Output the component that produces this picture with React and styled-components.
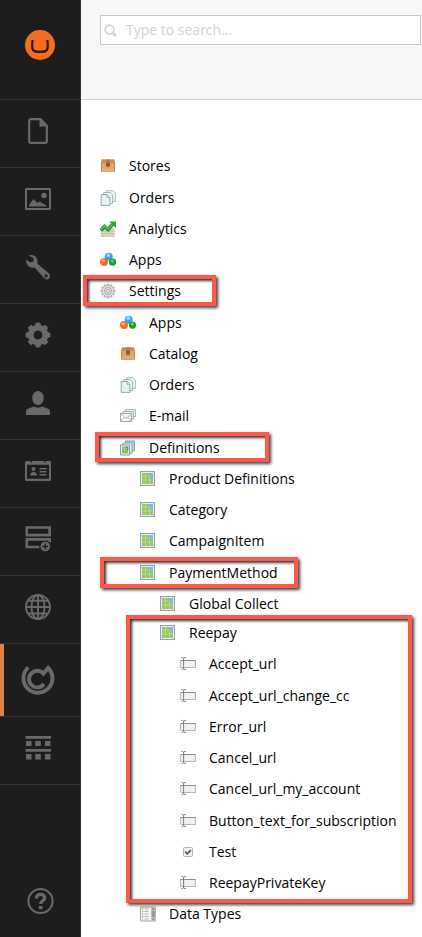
import React from "react";
import styled, { createGlobalStyle } from "styled-components";

const GlobalStyle = createGlobalStyle`
  * { box-sizing: border-box; }
  body {
    margin: 0;
    background: #fff;
    font-family: "Open Sans", "Noto Sans", sans-serif;
    font-size: 14px;
    color: #000;
  }
`;

const Page = styled.div`
  position: relative;
  display: flex;
  width: 422px;
  height: 937px;
  overflow: hidden;
`;

const Sidebar = styled.nav`
  display: flex;
  flex-direction: column;
  flex: none;
  width: 81px;
  background: #1d1d1d;
  border-right: 1px solid #343434;
`;

const LogoCell = styled.div`
  height: 100px;
  border-bottom: 1px solid #343434;
`;

const NavCell = styled.div`
  height: ${(p) => (p.$active ? 73 : 68)}px;
  border-bottom: 1px solid #343434;
  box-shadow: ${(p) => (p.$active ? "inset 4px 0 0 #e0824c" : "none")};
`;

const HelpCell = styled.div`
  margin-top: auto;
  height: 68px;
`;

const NavSvg = styled.svg`
  display: block;
  width: 80px;
  height: ${(p) => p.$h || 67}px;
  color: #696969;
  fill: currentColor;
  stroke: none;
`;

const Main = styled.main`
  flex: 1;
  display: flex;
  flex-direction: column;
  min-width: 0;
`;

const SearchBar = styled.header`
  height: 100px;
  padding: 15px 1px 0 19px;
  background: #f7f7f7;
  border-bottom: 1px solid #d5d5d5;
`;

const SearchField = styled.div`
  display: flex;
  align-items: center;
  gap: 9px;
  height: 30px;
  padding-left: 3px;
  background: #fff;
  border: 1px solid #c7c7c7;
  color: #d3d3d3;
  line-height: 20px;
`;

const SearchSvg = styled.svg`
  width: 13px;
  height: 14px;
  margin-top: 2px;
`;

const Tree = styled.div`
  padding: 50px 0 0 19px;
`;

const Row = styled.div`
  display: flex;
  align-items: center;
  gap: 13px;
  height: 32px;
  margin-bottom: ${(p) => p.$pitch - 32}px;
  padding-left: ${(p) => p.$level * 20}px;
  white-space: nowrap;
`;

const Label = styled.span`
  line-height: 20px;
`;

const TreeSvg = styled.svg`
  flex: none;
  width: 16px;
  height: 16px;
`;

const Highlight = styled.div`
  position: absolute;
  left: ${(p) => p.$x}px;
  top: ${(p) => p.$y}px;
  width: ${(p) => p.$w}px;
  height: ${(p) => p.$h}px;
  border: 4px solid #fd5a4c;
  box-shadow: 2px 2px 3px rgba(0, 0, 0, 0.75), inset 2px 2px 3px rgba(0, 0, 0, 0.8);
  pointer-events: none;
`;

const gearPath = (cx, cy, teeth, outer, inner, hole) => {
  const pts = [];
  const step = (Math.PI * 2) / teeth;
  for (let i = 0; i < teeth; i++) {
    const a = i * step;
    [[-0.3, inner], [-0.2, outer], [0.2, outer], [0.3, inner]].forEach(([f, r]) => {
      pts.push(`${(cx + r * Math.cos(a + f * step)).toFixed(2)} ${(cy + r * Math.sin(a + f * step)).toFixed(2)}`);
    });
  }
  return `M${pts.join("L")}ZM${cx - hole} ${cy}a${hole} ${hole} 0 1 0 ${hole * 2} 0a${hole} ${hole} 0 1 0 ${-hole * 2} 0Z`;
};

const navIcons = {
  content: (
    <>
      <path d="M31 19.2h9.500l6.300 6.500v15.600a1.600 1.600 0 0 1-1.600 1.600H30.800a1.600 1.600 0 0 1-1.600-1.600V20.800a1.600 1.600 0 0 1 1.800-1.600z" fill="none" stroke="currentColor" strokeWidth="2.200" />
      <path d="M39.500 19H41l6.500 7.500H42.500L39.500 27z" />
    </>
  ),
  media: (
    <>
      <path fillRule="evenodd" d="M26 20h24l1 1v20l-1 1H26l-1-1V21zM27 22v18h22V22z" />
      <path d="M29 38.500v-1.500l4.500-6 4 4 2-1.500 7 4v1z" />
      <circle cx="44" cy="27.500" r="2.700" />
    </>
  ),
  settings: (
    <path fillRule="evenodd" d="M28.500 19.500c4-1.700 9 1 9 6 0 1-.2 1.900-.2 1.900L49 37.500c3 3-1 8-4.500 5L34.500 31.500c-4 1-8-1.500-8.300-6.200l-.1-1.800 4.100 3 3.500-1-.2-3.600zM46 38.300a1.600 1.600 0 1 0 .1 3.200 1.600 1.600 0 0 0-.1-3.200z" />
  ),
  developer: <path fillRule="evenodd" strokeLinejoin="round" stroke="currentColor" strokeWidth="1" d={gearPath(38, 31, 8, 12.1, 9.9, 4.9)} />,
  users: (
    <>
      <ellipse cx="38" cy="26" rx="5.800" ry="7" />
      <path d="M26 43v-3c0-2 1-3 3-3.700l5-1.800c2.500 1.500 5.500 1.500 8 0l5 1.800c2 .7 3 1.700 3 3.700v3z" />
    </>
  ),
  members: (
    <>
      <path fillRule="evenodd" d="M26 21h4.500v1.500H32V21h12v1.500h1.500V21H50l1 1v18l-1 1H26l-1-1V22zM27 24.800V38.800H49V24.800z" />
      <circle cx="33.500" cy="29" r="2" />
      <path d="M30 35.500c0-2.300 1.500-3.500 3.500-3.500s3.500 1.200 3.500 3.500zM39.500 28H46.500v1.600h-7zM39.500 31H46.500v1.600h-7zM39.500 34H46.500v1.500h-7z" />
    </>
  ),
  forms: (
    <>
      <path fillRule="evenodd" d="M25.500 18.200h25.500v10.300h-25.500zM28 20.800v5h20.300v-5zM25.500 30h25.500v4.500H48.300v-1.700H28v5h11.500V40.300H25.500z" />
      <circle cx="45.300" cy="38.500" r="5.700" fill="#1d1d1d" />
      <circle cx="45.300" cy="38.500" r="4.800" />
      <path d="M45.300 35.500v6M42.300 38.500h6" stroke="#1d1d1d" strokeWidth="1.300" />
    </>
  ),
  translation: (
    <g fill="none" stroke="currentColor" strokeWidth="1.900">
      <circle cx="38" cy="31" r="12" />
      <ellipse cx="38" cy="31" rx="6.500" ry="12" />
      <path d="M38 19v24M26 31h24M28 24.800h20M28 37.500h20" />
    </g>
  ),
  commerce: (
    <path d="M28.300 23.400A14.500 14.500 0 1 0 48.200 24L43.500 29.600A8.300 8.300 0 1 0 44 40" fill="none" stroke="currentColor" strokeWidth="3.900" />
  ),
  grid: (
    <path d="M25.500 19h25.500v2.700h-25.500zM26 24h5.500v5H26zM35.300 24h5.500v5h-5.500zM45 24H50.500v5H45zM25.500 32h25.500v2.700h-25.500zM26 37h5.500v5.500H26zM35.300 37h5.500v5.500h-5.500zM45 37H50.500v5.500H45z" />
  ),
};

const treeIcons = {
  box: (
    <>
      <path d="M2 1.500h12L15 4.500v9H1v-9z" fill="#dfa56a" />
      <path d="M2 1.500h12L15 5H1z" fill="#c98c55" />
      <path d="M1.400 5v8.200h13.200V5" fill="none" stroke="#bd8450" strokeWidth=".8" />
      <path d="M6 5h4v4L9 8l-1 1.500L7 8 6 9z" fill="#8a5a36" />
      <path d="M6.500 1.500h3V5h-3z" fill="#b07645" />
      <path d="M2 12h12" stroke="#eec08c" />
    </>
  ),
  sheets: (
    <>
      <path d="M6.500 .7H13l2.400 2.400v8.400h-9z" fill="#edf6f7" stroke="#9cafb2" strokeWidth=".8" />
      <path d="M3.700 2.500h6.500l2.400 2.400v8.600H3.700z" fill="#edf6f7" stroke="#8fa4a8" strokeWidth=".8" />
      <path d="M1.200 4.500h6l2.700 2.700v8.200H1.200z" fill="#e6f1f2" stroke="#7f969b" strokeWidth=".8" />
      <path d="M7 4.700v2.600h2.800" fill="#fff" stroke="#7f969b" strokeWidth=".8" />
    </>
  ),
  chart: (
    <>
      <path d="M1 7h13.500v8.500H1z" fill="#dfd5c3" />
      <path d="M1 10h13.500M1 12.500h13.500M1 15.200h13.500" stroke="#b5aa96" strokeWidth=".7" />
      <path d="M.8 9.500 4.500 5.500 8 8.500l4.500-5" fill="none" stroke="#178f25" strokeWidth="3.500" />
      <path d="M.8 9 4.500 5 8 8l5-5" fill="none" stroke="#3fca48" strokeWidth="1.700" />
      <path d="M9 .5h7V7z" fill="#27a832" />
    </>
  ),
  apps: (
    <>
      <circle cx="8.700" cy="4.700" r="4" fill="#2fabea" />
      <circle cx="8.300" cy="3.200" r="1.900" fill="#87dcff" />
      <circle cx="4" cy="10" r="4" fill="#f0693a" />
      <circle cx="3.200" cy="8.700" r="1.700" fill="#ffad75" />
      <circle cx="12.500" cy="10.200" r="3.600" fill="#18a030" />
      <circle cx="12.200" cy="9" r="1.500" fill="#5fd65d" />
    </>
  ),
  gear: (
    <>
      <path fillRule="evenodd" d={gearPath(8, 8, 12, 7, 5.7, 1.5)} fill="#dedee1" stroke="#8f8f95" strokeWidth=".7" />
      <circle cx="8" cy="8" r="3.600" fill="none" stroke="#a5a5aa" strokeWidth=".8" />
    </>
  ),
  mail: (
    <>
      <path d="M5.500 1.500h10v7h-10z" fill="#edf3f4" stroke="#98a8aa" strokeWidth=".8" />
      <path d="M3 3.500h10.500v7.500H3z" fill="#f1f5f6" stroke="#8e9fa2" strokeWidth=".8" />
      <path d="M.5 5.500h11v8H.5z" fill="#f6fafa" stroke="#80959a" strokeWidth=".8" />
      <path d="M.5 5.700 6 10.500l5.500-4.800M.5 13.300l4-4M11.500 13.300l-4-4" fill="none" stroke="#93a6aa" strokeWidth=".8" />
    </>
  ),
  maps: (
    <>
      <path d="M5.500 1h9v10h-9z" fill="#a4d8ef" stroke="#80979a" strokeWidth=".9" />
      <path d="M3 3h9v10H3z" fill="#e7f3f4" stroke="#80979a" strokeWidth=".9" />
      <path d="M.6 5h9v10h-9z" fill="#fff" stroke="#718a8d" strokeWidth=".9" />
      <path d="M2 6.500h6.300v7H2z" fill="#8aba57" />
      <path d="M5 6.500h3.300v4z" fill="#3a9fdf" />
      <path d="M2 9h5M4.500 7v6" stroke="#c6da74" strokeWidth=".6" />
    </>
  ),
  map: (
    <>
      <rect x=".6" y=".6" width="13.800" height="13.800" fill="#fff" stroke="#8fa5a8" strokeWidth="1.200" />
      <rect x="2" y="2" width="11" height="11" fill="#98c468" />
      <path d="M2 5h7M2 9h11M5.500 2v11M9.500 5v8" stroke="#c9df91" strokeWidth=".7" />
      <path d="M6.800 2H13v9c-.5-4-2.200-7.200-6.200-9z" fill="#69bff0" />
    </>
  ),
  field: (
    <>
      <path d="M.6 4.500h14.800v7H.6z" fill="#f1f1f1" stroke="#b5b5b5" />
      <path d="M.5 4.500h15" stroke="#8d8d8d" />
      <path d="M1.500 1.500h1.200l1 .8 1-.8H6M3.600 2v11M1.500 13.500h1.200l1-.8 1 .8H6" fill="none" stroke="#707070" strokeWidth=".9" />
    </>
  ),
  check: (
    <>
      <rect x="3.500" y="3.500" width="9" height="9" rx="1" fill="#f2f2f2" stroke="#b2b2b2" />
      <path d="m5.200 7.500 2 2.400 3.700-3.800" fill="none" stroke="#555" strokeWidth="1.600" />
    </>
  ),
  types: (
    <>
      <path d="M.5 1h15v14H.5z" fill="#f5f5f5" stroke="#a5a5a5" />
      <path d="M11 1h4.500v14H11z" fill="#c3c3c3" />
      <path d="M11.800 5h3v6h-3z" fill="#999" />
      <path d="M12.500 3h1.500M12.500 13H14" stroke="#444" />
      <path d="M4.500 3h4M4.500 5.500h4M4.500 8h4M4.500 10.500h4M4.500 13h4" stroke="#aaa" strokeWidth=".9" />
      <path d="M2 3h1.300M2 10.500h1.300" stroke="#3cb24b" />
      <path d="M2 5.500h1.300M2 13h1.300" stroke="#e99837" />
      <path d="M2 8h1.300" stroke="#4f8cdd" />
    </>
  ),
};

/* level, icon, label, distance to the next row */
const rows = [
  [0, "box", "Stores", 32],
  [0, "sheets", "Orders", 31],
  [0, "chart", "Analytics", 31],
  [0, "apps", "Apps", 31],
  [0, "gear", "Settings", 32],
  [1, "apps", "Apps", 31],
  [1, "box", "Catalog", 31],
  [1, "sheets", "Orders", 31],
  [1, "mail", "E-mail", 32],
  [1, "maps", "Definitions", 31],
  [2, "map", "Product Definitions", 31],
  [2, "map", "Category", 31],
  [2, "map", "CampaignItem", 32],
  [2, "map", "PaymentMethod", 31],
  [3, "map", "Global Collect", 29],
  [3, "map", "Reepay", 31],
  [4, "field", "Accept_url", 32],
  [4, "field", "Accept_url_change_cc", 31],
  [4, "field", "Error_url", 31],
  [4, "field", "Cancel_url", 31],
  [4, "field", "Cancel_url_my_account", 32],
  [4, "field", "Button_text_for_subscription", 31],
  [4, "check", "Test", 31],
  [4, "field", "ReepayPrivateKey", 31],
  [2, "types", "Data Types", 32],
];

export default function App() {
  return (
    <Page>
      <GlobalStyle />
      <Sidebar>
        <LogoCell>
          <NavSvg $h={99} viewBox="0 0 80 99">
            <circle cx="40" cy="45" r="15" fill="#f56e1f" />
            <path d="M32.500 40c-.8 8-.4 11 3.200 11.500 2.500.4 6 .4 8.500 0 3.600-.5 4-3.500 3.200-11.500" fill="none" stroke="#2a1d15" strokeWidth="2.300" />
          </NavSvg>
        </LogoCell>
        {Object.entries(navIcons).map(([name, icon]) => {
          const active = name === "commerce";
          const h = active ? 72 : 67;
          return (
            <NavCell key={name} $active={active}>
              <NavSvg $h={h} viewBox={`0 0 80 ${h}`}>{icon}</NavSvg>
            </NavCell>
          );
        })}
        <HelpCell>
          <NavSvg viewBox="0 0 80 67">
            <circle cx="40.500" cy="32" r="12.100" fill="none" stroke="currentColor" strokeWidth="2" />
            <path d="M36.300 29.500c0-5.500 8.400-5 8.400-.7 0 3-4 3-4 6.200" fill="none" stroke="currentColor" strokeWidth="3.300" />
            <path d="M38.800 37h3.800v3.200H38.800z" />
          </NavSvg>
        </HelpCell>
      </Sidebar>
      <Main>
        <SearchBar>
          <SearchField>
            <SearchSvg viewBox="0 0 13 14">
              <circle cx="5.500" cy="5.500" r="4.400" fill="none" stroke="#d3d3d3" strokeWidth="1.700" />
              <path d="m8.500 8.500 3.300 3.500" stroke="#d3d3d3" strokeWidth="2.600" />
            </SearchSvg>
            Type to search...
          </SearchField>
        </SearchBar>
        <Tree>
          {rows.map(([level, icon, label, pitch], i) => (
            <Row key={i} $level={level} $pitch={pitch}>
              <TreeSvg viewBox="0 0 16 16">{treeIcons[icon]}</TreeSvg>
              <Label>{label}</Label>
            </Row>
          ))}
        </Tree>
      </Main>
      <Highlight $x={83} $y={275} $w={133} $h={31} />
      <Highlight $x={95} $y={432} $w={174} $h={30} />
      <Highlight $x={100} $y={557} $w={198} $h={31} />
      <Highlight $x={126} $y={615} $w={286} $h={288} />
    </Page>
  );
}
